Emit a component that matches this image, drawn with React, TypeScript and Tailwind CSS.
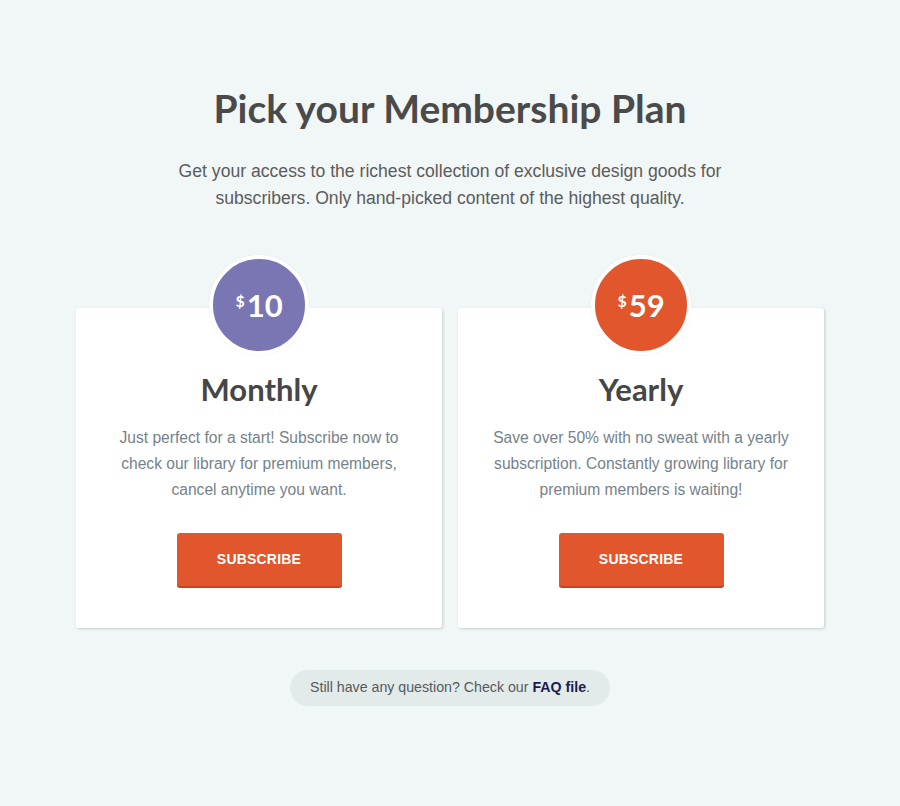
import React from "react";

type Plan = {
  price: string;
  name: string;
  lines: string[];
  color: string;
};

const plans: Plan[] = [
  {
    price: "10",
    name: "Monthly",
    lines: [
      "Just perfect for a start! Subscribe now to",
      "check our library for premium members,",
      "cancel anytime you want.",
    ],
    color: "bg-[#7a76b3]",
  },
  {
    price: "59",
    name: "Yearly",
    lines: [
      "Save over 50% with no sweat with a yearly",
      "subscription. Constantly growing library for",
      "premium members is waiting!",
    ],
    color: "bg-[#e1562c]",
  },
];

function PlanCard({ plan }: { plan: Plan }) {
  return (
    <div className="w-[366px] bg-white rounded-[3px] shadow-[1px_1px_3px_rgba(0,0,0,0.18)] flex flex-col items-center pb-10">
      <div
        className={`-mt-[53px] w-[100px] h-[100px] rounded-full border-4 border-white ${plan.color} flex items-center justify-center shadow-[0_0_2px_rgba(0,0,0,0.08)]`}
      >
        <span className="font-['Lato',sans-serif] font-bold text-white leading-none flex items-start">
          <span className="text-[16px] mt-[3px] mr-[2px]">$</span>
          <span className="text-[31px]">{plan.price}</span>
        </span>
      </div>
      <h2 className="mt-[14px] font-['Lato',sans-serif] font-bold text-[31px] leading-[40px] text-[#464646]">
        {plan.name}
      </h2>
      <p className="mt-4 font-['Liberation_Sans',sans-serif] text-[15.6px] leading-[26px] text-[#75828c] text-center">
        {plan.lines.map((l, i) => (
          <React.Fragment key={i}>
            {l}
            {i < plan.lines.length - 1 && <br />}
          </React.Fragment>
        ))}
      </p>
      <button className="mt-[30px] w-[165px] h-[55px] rounded-[3px] bg-[#e1562c] border-b-2 border-[#c4441d] text-white font-['Liberation_Sans',sans-serif] font-bold text-[14px] tracking-[0.2px]">
        SUBSCRIBE
      </button>
    </div>
  );
}

export default function App() {
  return (
    <div className="min-h-[806px] w-full bg-[#f1f6f6] flex flex-col items-center pt-[84px]">
      <h1 className="font-['Lato',sans-serif] font-bold text-[39px] leading-[48px] text-[#4a4a4a]">
        Pick your Membership Plan
      </h1>
      <p className="mt-[26px] font-['Liberation_Sans',sans-serif] text-[17.6px] leading-[27px] text-[#5c5c5c] text-center">
        Get your access to the richest collection of exclusive design goods for
        <br />
        subscribers. Only hand-picked content of the highest quality.
      </p>
      <div className="mt-[96px] flex gap-4">
        {plans.map((p) => (
          <PlanCard key={p.name} plan={p} />
        ))}
      </div>
      <div className="mt-[42px] h-9 px-[20px] rounded-full bg-[#e3eaea] flex items-center font-['Liberation_Sans',sans-serif] text-[14.2px] text-[#555a5e]">
        Still have any question? Check our&nbsp;
        <a className="font-bold text-[#1c1d4d]">FAQ file</a>.
      </div>
    </div>
  );
}
